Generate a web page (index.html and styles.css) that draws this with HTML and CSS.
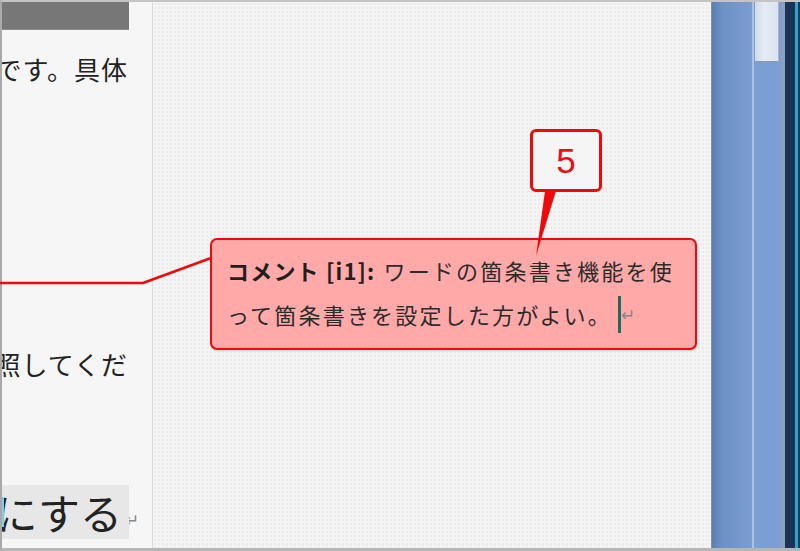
FILE: index.html
```html
<!DOCTYPE html>
<html lang="ja">
<head>
<meta charset="utf-8">
<link rel="stylesheet" href="styles.css">
</head>
<body>
<div class="frame">
  <div class="page">
    <div class="bar"></div>
    <div class="line line1"><span>ルです。具体</span></div>
    <div class="line line2"><span>を参照してくだ</span></div>
    <div class="line3">
      <div class="hl"><span class="sel"></span><span>的にする</span></div>
      <span class="ret">↵</span>
    </div>
  </div>
  <div class="pane">
    <div class="comment">
      <div class="cline"><b>コメント [i1]:</b> ワードの箇条書き機能を使</div>
      <div class="cline">って箇条書きを設定した方がよい。<span class="caret"></span><span class="cret">↵</span></div>
    </div>
  </div>
  <div class="scroll">
    <div class="s-edge"></div>
    <div class="s-main"></div>
    <div class="s-light"></div>
    <div class="s-track"><div class="thumb"></div></div>
    <div class="s-grey"></div>
    <div class="s-navy"></div>
    <div class="s-teal"></div>
    <div class="s-dark"></div>
  </div>
</div>
<svg class="connector" width="800" height="551" viewBox="0 0 800 551">
  <polyline points="0,283 143,283 211,258" fill="none" stroke="#ee0a0a" stroke-width="2.5" stroke-linejoin="round"/>
  <polygon points="545,191 556,191 536,256" fill="#ee0a0a"/>
</svg>
<div class="badge">5</div>
</body>
</html>
```

FILE: styles.css
```css
html, body {
  margin: 0;
  padding: 0;
}
body {
  width: 800px;
  height: 551px;
  overflow: hidden;
  position: relative;
  background: #f4f4f4;
  font-family: "Noto Sans CJK JP", "Liberation Sans", sans-serif;
}
.frame {
  box-sizing: border-box;
  width: 800px;
  height: 551px;
  display: flex;
  border-top: 2px solid #c4c4c4;
  border-left: 2px solid #a9a9a9;
  border-bottom: 3px solid #b6b6b6;
}
.page {
  width: 150px;
  flex: none;
  background: #f6f6f6;
  border-right: 1px solid #dadada;
  overflow: hidden;
  display: flex;
  flex-direction: column;
}
.bar {
  width: 127px;
  height: 28px;
  background: #777777;
  border-bottom: 1px solid #8a8a8a;
  box-sizing: border-box;
}
.line {
  display: flex;
  justify-content: flex-end;
  white-space: nowrap;
  font-size: 26px;
  line-height: 34px;
  height: 34px;
  color: #222;
  padding-right: 24px;
  letter-spacing: 1px;
}
.line1 {
  margin-top: 22px;
}
.line2 {
  margin-top: 261px;
}
.line3 {
  margin-top: 104px;
  display: flex;
  align-items: flex-end;
  height: 54px;
}
.hl {
  width: 127px;
  height: 54px;
  flex: none;
  background: #e7e7e7;
  display: flex;
  justify-content: flex-end;
  align-items: center;
  white-space: nowrap;
  font-size: 42px;
  line-height: 54px;
  color: #222;
  padding-right: 7px;
  box-sizing: border-box;
  overflow: hidden;
  position: relative;
}
.sel {
  position: absolute;
  left: 0;
  top: 12px;
  width: 2px;
  height: 30px;
  background: #7fd0e6;
}
.ret {
  margin-left: -4px;
  margin-bottom: 12px;
  font-size: 17px;
  line-height: 17px;
  color: #888;
}
.pane {
  flex: 1;
  background-color: #f4f4f4;
  background-image: radial-gradient(circle, #eaeaea 0.7px, transparent 1.1px);
  background-size: 4px 4px;
}
.comment {
  box-sizing: border-box;
  margin-top: 236px;
  margin-left: 57px;
  width: 487px;
  height: 112px;
  border: 2px solid #ee0a0a;
  border-radius: 7px;
  background: #ffa9a9;
  padding: 8px 0 0 15px;
  color: #2b2b2b;
  font-size: 22px;
  letter-spacing: 2.2px;
  box-shadow: 1px 1px 2px rgba(0,0,0,0.15);
}
.cline {
  height: 44px;
  line-height: 44px;
  white-space: nowrap;
  display: flex;
  align-items: center;
}
.cline b {
  font-weight: 700;
  color: #1f1f1f;
  letter-spacing: 1.2px;
  margin-right: 8px;
}
.caret {
  display: inline-block;
  width: 3px;
  height: 37px;
  margin-left: 6px;
  background: #1f6a5a;
}
.cret {
  font-size: 17px;
  color: #8f8282;
  margin-left: 0;
}
.scroll {
  width: 89px;
  flex: none;
  display: flex;
}
.s-edge { width: 1px; background: #8a8e96; }
.s-main { width: 40px; background: linear-gradient(to right, #5a7eb2, #6d92c6 25%, #7698cc 70%, #7a9dd0); }
.s-light { width: 2px; background: #aac3e5; }
.s-track { width: 27px; background: #7b9fd3; }
.thumb {
  width: 24px;
  height: 60px;
  margin-left: 1px;
  background: linear-gradient(to right, #cfd9e8, #e6ecf5 40%, #dbe3ef);
  border-bottom: 1px solid #8d99aa;
  border-right: 1px solid #a9b5c6;
  box-sizing: border-box;
}
.s-grey { width: 4px; background: #8ba0c0; }
.s-navy { width: 10px; background: #1c3454; }
.s-teal { width: 3px; background: #2fa4cd; }
.s-dark { width: 2px; background: #1c3a56; }
.connector {
  position: absolute;
  left: 0;
  top: 0;
  pointer-events: none;
}
.badge {
  position: absolute;
  left: 530px;
  top: 129px;
  width: 72px;
  height: 63px;
  box-sizing: border-box;
  border: 3px solid #ee0a0a;
  border-radius: 6px;
  background: #f5f5f5;
  color: #e81010;
  font-family: "Liberation Sans", Arial, sans-serif;
  font-size: 35px;
  line-height: 57px;
  text-align: center;
}
```
